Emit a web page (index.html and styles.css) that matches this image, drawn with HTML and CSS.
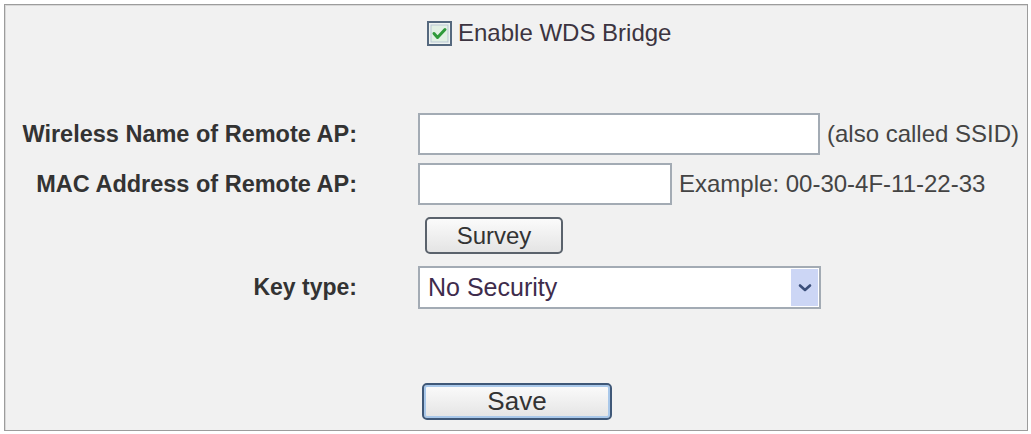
FILE: index.html
```html
<!DOCTYPE html>
<html lang="en">
<head>
    <meta charset="UTF-8">
    <title>Wireless Settings - WDS</title>
    <link rel="stylesheet" href="styles.css">
</head>
<body>
    <div class="panel">
        <div class="row check-row">
            <div></div>
            <label class="check">
                <span class="box">
                    <svg width="25" height="25" viewBox="0 0 25 25">
                        <rect x="1" y="1" width="23" height="23" fill="#eef3f1" stroke="#55687e" stroke-width="2"/>
                        <rect x="4" y="4" width="17" height="17" fill="#e2f0e4" stroke="#b9c7d3" stroke-width="1"/>
                        <path d="M7 12.5 L10.5 16.5 L18 8.5" fill="none" stroke="#2f9a3a" stroke-width="3" stroke-linecap="round" stroke-linejoin="round"/>
                    </svg>
                </span>
                Enable WDS Bridge
            </label>
        </div>

        <div class="row ssid-row">
            <div class="label">Wireless Name of Remote AP:</div>
            <div class="field">
                <input type="text" class="text-input wide">
                <span class="hint">(also called SSID)</span>
            </div>
        </div>

        <div class="row mac-row">
            <div class="label">MAC Address of Remote AP:</div>
            <div class="field">
                <input type="text" class="text-input narrow">
                <span class="hint">Example: 00-30-4F-11-22-33</span>
            </div>
        </div>

        <div class="row survey-row">
            <div></div>
            <div class="field">
                <button class="btn survey-btn">Survey</button>
            </div>
        </div>

        <div class="row key-row">
            <div class="label">Key type:</div>
            <div class="field">
                <div class="select">
                    <span class="select-value">No Security</span>
                    <span class="select-arrow">
                        <svg width="14" height="10" viewBox="0 0 14 10">
                            <path d="M2 2.5 L7 7 L12 2.5" fill="none" stroke="#3b4f7a" stroke-width="2.6" stroke-linecap="round" stroke-linejoin="round"/>
                        </svg>
                    </span>
                </div>
            </div>
        </div>

        <div class="row save-row">
            <div></div>
            <div class="field">
                <button class="btn save-btn">Save</button>
            </div>
        </div>
    </div>
</body>
</html>
```

FILE: styles.css
```css
body {
    margin: 0;
    background: #ffffff;
    font-family: 'Liberation Sans', Arial, sans-serif;
    color: #333;
}

.panel {
    margin: 4px 0 0 4px;
    width: 1022px;
    height: 425px;
    border: 1px solid #9c9c9c;
    box-shadow: inset 1px 1px 0 #d8d8d8;
    background: #f1f1f1;
}

.row {
    display: grid;
    grid-template-columns: 352px 1fr;
    column-gap: 61px;
    align-items: center;
}

.check-row {
    margin-top: 14px;
    height: 26px;
}

.ssid-row {
    margin-top: 68px;
    height: 42px;
}

.mac-row {
    margin-top: 8px;
    height: 42px;
}

.survey-row {
    margin-top: 12px;
    height: 37px;
}

.key-row {
    margin-top: 12px;
    height: 43px;
}

.save-row {
    margin-top: 74px;
    height: 37px;
}

.label {
    text-align: right;
    font-weight: bold;
    font-size: 23.5px;
    color: #333;
}

.key-row .label {
    font-size: 23px;
}

.field {
    display: flex;
    align-items: center;
    height: 100%;
}

.check {
    display: flex;
    align-items: center;
    gap: 6px;
    margin-left: 9px;
    font-size: 24px;
    color: #3c3440;
}

.box {
    display: flex;
    width: 25px;
    height: 25px;
}

.text-input {
    box-sizing: border-box;
    height: 42px;
    border: 2px solid #a3abb4;
    background: #fff;
    margin: 0;
    padding: 0 6px;
}

.wide {
    width: 402px;
}

.narrow {
    width: 254px;
}

.hint {
    margin-left: 7px;
    font-size: 24px;
    color: #444;
}

.btn {
    box-sizing: border-box;
    height: 37px;
    border-radius: 5px;
    font-family: 'Liberation Sans', Arial, sans-serif;
    font-size: 24px;
    color: #333;
    background: linear-gradient(#fbfbfb, #e4e4e4);
    padding: 0;
}

.survey-btn {
    margin-left: 7px;
    width: 138px;
    border: 2px solid #5a626c;
}

.save-btn {
    margin-left: 4px;
    width: 190px;
    border: 2px solid #3f5878;
    box-shadow: inset 0 0 0 2px #a9c8ea;
    font-size: 26px;
}

.select {
    box-sizing: border-box;
    width: 403px;
    height: 43px;
    border: 2px solid #a3abb4;
    background: #fff;
    display: flex;
    align-items: center;
    justify-content: space-between;
}

.select-value {
    padding-left: 8px;
    font-size: 25px;
    color: #3e2c4c;
}

.select-arrow {
    width: 27px;
    height: 37px;
    margin-right: 1px;
    background: #ccd6f5;
    display: flex;
    align-items: center;
    justify-content: center;
}
```
